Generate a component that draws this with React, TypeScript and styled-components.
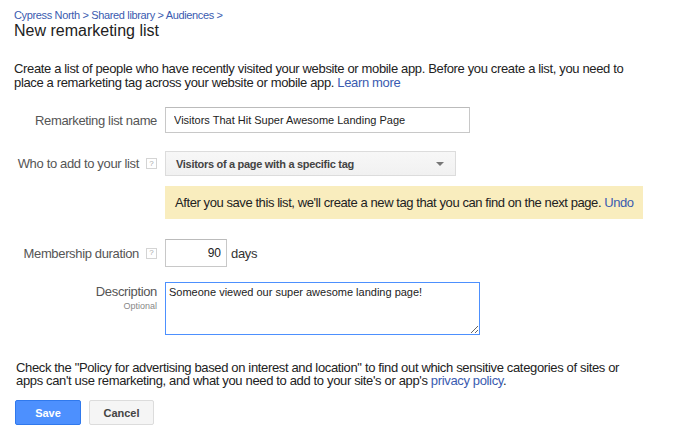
import styled, { createGlobalStyle } from 'styled-components';

const GlobalStyle = createGlobalStyle`
	body {
		margin: 0;
		background: #fff;
		font-family: 'Liberation Sans', Arial, sans-serif;
		color: #222;
		letter-spacing: -0.35px;
	}
`;

const Page = styled.div`
	width: 677px;
	height: 440px;
	padding: 9px 14px 0 14px;
	box-sizing: border-box;
	overflow: hidden;
`;

const Breadcrumb = styled.div`
	font-size: 11px;
	line-height: 13px;
	color: #3a5bb0;
`;

const Title = styled.h1`
	margin: 0;
	font-size: 16px;
	font-weight: normal;
	line-height: 18px;
	letter-spacing: 0;
	color: #222;
`;

const Intro = styled.p`
	margin: 22px 0 0 0;
	font-size: 13px;
	line-height: 14px;
	color: #222;
	max-width: 615px;
`;

const Link = styled.a`
	color: #3a5bb0;
	text-decoration: none;
	cursor: pointer;
`;

const Field = styled.div<{ $top: number; $align?: string }>`
	display: grid;
	grid-template-columns: 143px 1fr;
	column-gap: 8px;
	align-items: ${({ $align }) => $align || 'center'};
	margin-top: ${({ $top }) => $top}px;
`;

const Label = styled.div`
	text-align: right;
	font-size: 13px;
	line-height: 15px;
	color: #555;
	white-space: nowrap;
	display: flex;
	justify-content: flex-end;
	align-items: center;
`;

const LabelStack = styled.div`
	text-align: right;
	padding-top: 2px;
`;

const Sub = styled.div`
	font-size: 9px;
	letter-spacing: 0;
	color: #888;
	margin-top: 2px;
`;

const Help = styled.span`
	display: inline-flex;
	align-items: center;
	justify-content: center;
	width: 9px;
	height: 9px;
	margin-left: 7px;
	border: 1px solid #d4d4d4;
	font-size: 8px;
	letter-spacing: 0;
	color: #aaa;
	line-height: 1;
`;

const TextInput = styled.input`
	width: 305px;
	height: 26px;
	box-sizing: border-box;
	border: 1px solid #c8c8c8;
	border-top-color: #bbb;
	padding: 0 8px;
	font-family: inherit;
	font-size: 11px;
	letter-spacing: 0;
	color: #222;
	outline: none;
`;

const Select = styled.div`
	width: 291px;
	height: 25px;
	box-sizing: border-box;
	border: 1px solid #dcdcdc;
	background: linear-gradient(#f7f7f7, #f1f1f1);
	display: flex;
	align-items: center;
	justify-content: space-between;
	padding: 0 11px 0 10px;
	font-size: 11px;
	letter-spacing: -0.3px;
	font-weight: bold;
	color: #444;
`;

const Caret = styled.span`
	width: 0;
	height: 0;
	border-left: 4px solid transparent;
	border-right: 4px solid transparent;
	border-top: 4px solid #777;
`;

const Notice = styled.div`
	grid-column: 2;
	width: 478px;
	height: 33px;
	box-sizing: border-box;
	background: #f9edbe;
	display: flex;
	align-items: center;
	padding-left: 10px;
	font-size: 13px;
	letter-spacing: -0.42px;
	color: #222;
	white-space: nowrap;
`;

const Duration = styled.div`
	display: flex;
	align-items: center;
	gap: 4px;
	font-size: 13px;
	color: #333;
`;

const NumberInput = styled(TextInput)`
	width: 62px;
	height: 28px;
	text-align: right;
	padding: 0 5px;
	font-size: 12px;
`;

const TextArea = styled.textarea`
	width: 315px;
	height: 53px;
	box-sizing: border-box;
	border: 1px solid #4d90fe;
	padding: 3px 3px;
	font-family: inherit;
	font-size: 11px;
	letter-spacing: 0;
	color: #222;
	outline: none;
	resize: both;
	display: block;
`;

const Policy = styled.p`
	margin: 26px 0 0 2px;
	font-size: 13px;
	line-height: 13px;
	color: #222;
	max-width: 615px;
`;

const Actions = styled.div`
	display: flex;
	gap: 8px;
	margin-top: 13px;
	margin-left: 1px;
`;

const Button = styled.button<{ $primary?: boolean }>`
	width: ${({ $primary }) => ($primary ? 66 : 65)}px;
	height: 25px;
	box-sizing: border-box;
	border: 1px solid ${({ $primary }) => ($primary ? '#3079ed' : '#dcdcdc')};
	border-radius: 2px;
	background: ${({ $primary }) => ($primary ? '#4d90fe' : '#f5f5f5')};
	color: ${({ $primary }) => ($primary ? '#fff' : '#444')};
	font-family: inherit;
	font-size: 11px;
	font-weight: bold;
	letter-spacing: 0;
	cursor: pointer;
`;

export default function App() {
	return (
		<>
			<GlobalStyle />
			<Page>
				<Breadcrumb>Cypress North &gt; Shared library &gt; Audiences &gt;</Breadcrumb>
				<Title>New remarketing list</Title>
				<Intro>
					Create a list of people who have recently visited your website or mobile app. Before you create a list, you need to
					place a remarketing tag across your website or mobile app. <Link>Learn more</Link>
				</Intro>

				<Field $top={17}>
					<Label>Remarketing list name</Label>
					<TextInput defaultValue="Visitors That Hit Super Awesome Landing Page" />
				</Field>

				<Field $top={18}>
					<Label>
						Who to add to your list<Help>?</Help>
					</Label>
					<Select>
						Visitors of a page with a specific tag
						<Caret />
					</Select>
				</Field>

				<Field $top={10}>
					<Notice>
						After you save this list, we'll create a new tag that you can find on the next page.&nbsp;<Link>Undo</Link>
					</Notice>
				</Field>

				<Field $top={20}>
					<Label>
						Membership duration<Help>?</Help>
					</Label>
					<Duration>
						<NumberInput defaultValue="90" />
						days
					</Duration>
				</Field>

				<Field $top={15} $align="start">
					<LabelStack>
						<Label>Description</Label>
						<Sub>Optional</Sub>
					</LabelStack>
					<TextArea defaultValue="Someone viewed our super awesome landing page!" />
				</Field>

				<Policy>
					Check the "Policy for advertising based on interest and location" to find out which sensitive categories of sites or
					apps can't use remarketing, and what you need to add to your site's or app's <Link>privacy policy</Link>.
				</Policy>

				<Actions>
					<Button $primary>Save</Button>
					<Button>Cancel</Button>
				</Actions>
			</Page>
		</>
	);
}
